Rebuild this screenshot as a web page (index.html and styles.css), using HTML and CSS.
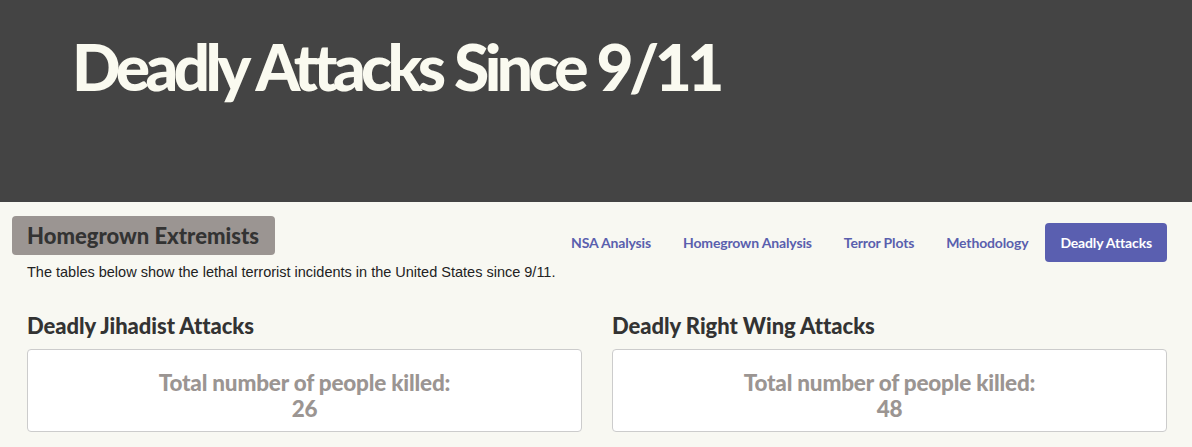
FILE: index.html
```html
<!DOCTYPE html>
<html lang="en">
<head>
<meta charset="utf-8">
<title>Deadly Attacks Since 9/11</title>
<link rel="stylesheet" href="styles.css">
</head>
<body>
<header class="hero">
  <h1 class="hero-title">Deadly Attacks Since 9/11</h1>
</header>
<main class="container">
  <div class="top-row">
    <h2 class="badge">Homegrown Extremists</h2>
    <nav class="nav">
      <a class="nav-link" href="#">NSA Analysis</a>
      <a class="nav-link" href="#">Homegrown Analysis</a>
      <a class="nav-link" href="#">Terror Plots</a>
      <a class="nav-link" href="#">Methodology</a>
      <a class="nav-link active" href="#">Deadly Attacks</a>
    </nav>
  </div>
  <p class="intro">The tables below show the lethal terrorist incidents in the United States since 9/11.</p>
  <div class="columns">
    <section class="col">
      <h3 class="col-title">Deadly Jihadist Attacks</h3>
      <div class="card">
        <div class="card-label">Total number of people killed:</div>
        <div class="card-value">26</div>
      </div>
    </section>
    <section class="col">
      <h3 class="col-title">Deadly Right Wing Attacks</h3>
      <div class="card">
        <div class="card-label">Total number of people killed:</div>
        <div class="card-value">48</div>
      </div>
    </section>
  </div>
</main>
</body>
</html>
```
FILE: styles.css
```css
html, body {
  margin: 0;
  padding: 0;
}
body {
  background: #f8f8f2;
  font-family: "Liberation Sans", Arial, sans-serif;
  color: #222;
  height: 447px;
  overflow: hidden;
}
.hero {
  background: #444444;
  height: 202px;
  padding-left: 72px;
  box-sizing: border-box;
  overflow: hidden;
}
.hero-title {
  margin: 35px 0 0 0;
  font-family: Lato, "Noto Sans", sans-serif;
  font-weight: 900;
  font-size: 64px;
  line-height: 64px;
  letter-spacing: -4.6px;
  word-spacing: 2px;
  color: #fafaf0;
}
.container {
  padding: 14px 25px 0 27px;
}
.top-row {
  display: flex;
  justify-content: space-between;
  align-items: flex-start;
}
.badge {
  margin: 0 0 0 -15px;
  background: #9b9592;
  color: #333;
  border-radius: 4px;
  height: 39px;
  line-height: 39px;
  padding: 0 16px 0 15px;
  font-family: Lato, "Noto Sans", sans-serif;
  font-weight: 900;
  font-size: 22px;
  letter-spacing: 0;
}
.nav {
  display: flex;
  gap: 2px;
  margin-top: 7px;
}
.nav-link {
  display: block;
  height: 39px;
  line-height: 39px;
  padding: 0 15px;
  border-radius: 4px;
  font-family: Lato, "Noto Sans", sans-serif;
  font-weight: 700;
  font-size: 14px;
  letter-spacing: -0.15px;
  color: #5a5fae;
  text-decoration: none;
}
.nav-link.active {
  background: #5a5fb0;
  color: #fff;
}
.intro {
  margin: 1px 0 0 0;
  font-size: 14.5px;
  line-height: 18px;
  color: #222;
}
.columns {
  display: grid;
  grid-template-columns: 555px 555px;
  column-gap: 30px;
  margin-top: 33px;
}
.col-title {
  margin: 0 0 11px 0;
  font-family: Lato, "Noto Sans", sans-serif;
  font-weight: 900;
  font-size: 22px;
  line-height: 24px;
  letter-spacing: -0.05px;
  color: #333;
}
.card {
  background: #fff;
  border: 1px solid #cccccc;
  border-radius: 4px;
  height: 83px;
  box-sizing: border-box;
  padding-top: 20px;
  text-align: center;
  font-family: Lato, "Noto Sans", sans-serif;
  font-weight: 900;
  font-size: 22.5px;
  line-height: 26px;
  letter-spacing: -0.2px;
  color: #9b9592;
}
```
